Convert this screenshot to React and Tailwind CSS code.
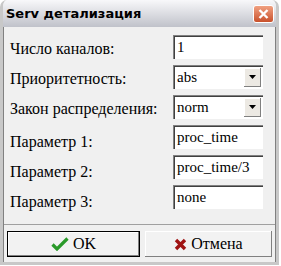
import React from "react";

function Input({ value }) {
  return (
    <div className="w-[90px] h-[24px] bg-white flex items-center pl-[3px] text-[15px] text-black shadow-[inset_1px_1px_0_#808080,inset_2px_2px_0_#404040]">
      <span className="pl-[1px]">{value}</span>
    </div>
  );
}

function Select({ value }) {
  return (
    <div className="w-[90px] h-[24px] bg-white flex items-center justify-between pl-[3px] pr-[2px] text-[15px] text-black shadow-[inset_1px_1px_0_#808080,inset_2px_2px_0_#404040]">
      <span className="pl-[1px]">{value}</span>
      <div className="w-[17px] h-[19px] bg-[#ece9e3] flex items-center justify-center shadow-[inset_-1px_-1px_0_#808080,inset_1px_1px_0_#fff]">
        <svg width="7" height="4" viewBox="0 0 7 4"><path d="M0 0h7L3.5 4z" fill="#000" /></svg>
      </div>
    </div>
  );
}

export default function App() {
  const rows = [
    ["Число каналов:", <Input value="1" />, "pt-[3px]"],
    ["Приоритетность:", <Select value="abs" />, "pt-[3px]"],
    ["Закон распределения:", <Select value="norm" />, "pt-[3px]"],
    ["Параметр 1:", <Input value="proc_time" />, "pt-[10px]"],
    ["Параметр 2:", <Input value="proc_time/3" />, "pt-[10px]"],
    ["Параметр 3:", <Input value="none" />, "pt-[10px]"],
  ];
  return (
    <div className="w-[281px] h-[266px] bg-white">
      <div className="w-[279px] h-[265px] flex flex-col bg-[#f0f0f0] border-l-[3px] border-r-[3px] border-b-[3px] border-[#c8c8c8] rounded-t-[7px] overflow-hidden">
        <div className="h-[27px] -mx-[3px] shrink-0 flex items-center justify-between pl-[6px] pr-[5px] bg-gradient-to-b from-[#f8f8fa] via-[#dcdde2] to-[#c0c2ca] rounded-t-[7px]">
          <span className="text-[13px] font-bold text-black font-['DejaVu_Sans',sans-serif]">Serv детализация</span>
          <div className="w-[21px] h-[18px] rounded-[3px] bg-gradient-to-b from-[#f0a080] to-[#c8502a] border border-white flex items-center justify-center">
            <svg width="11" height="10" viewBox="0 0 11 10"><path d="M1.5 1l8 8M9.5 1l-8 8" stroke="#fff" strokeWidth="2.4" /></svg>
          </div>
        </div>
        <div className="flex-1 flex flex-col border-l border-[#808080] border-r border-r-[#808080] font-['Liberation_Serif','DejaVu_Serif',serif]">
          <div className="flex flex-col gap-[6px] pt-[8px] pl-[6px] pr-[12px]">
            {rows.map(([label, ctl, pt], i) => (
              <div key={i} className="flex items-center justify-between h-[24px]">
                <span className={"text-[16px] text-black " + pt}>{label}</span>
                {ctl}
              </div>
            ))}
          </div>
          <div className="mt-auto border-t border-[#a0a0a0] flex gap-[5px] px-[3px] pt-[6px] pb-[5px]">
            <button className="w-[134px] h-[26px] flex items-center justify-center gap-[4px] bg-[#f2f2f2] border border-black shadow-[inset_-1px_-1px_0_#808080,inset_1px_1px_0_#fff] text-[16px]">
              <svg width="18" height="14" viewBox="0 0 18 14"><path d="M1.5 7.5l4.5 4.5L16.5 1.5" stroke="#2a9a2a" strokeWidth="3.2" fill="none" /></svg>
              OK
            </button>
            <button className="w-[128px] h-[26px] flex items-center justify-center gap-[4px] bg-[#f2f2f2] shadow-[inset_-1px_-1px_0_#808080,inset_1px_1px_0_#fff] text-[16px]">
              <svg width="13" height="13" viewBox="0 0 13 13"><path d="M2 2l9 9M11 2l-9 9" stroke="#a01414" strokeWidth="3.4" /></svg>
              Отмена
            </button>
          </div>
        </div>
      </div>
    </div>
  );
}
